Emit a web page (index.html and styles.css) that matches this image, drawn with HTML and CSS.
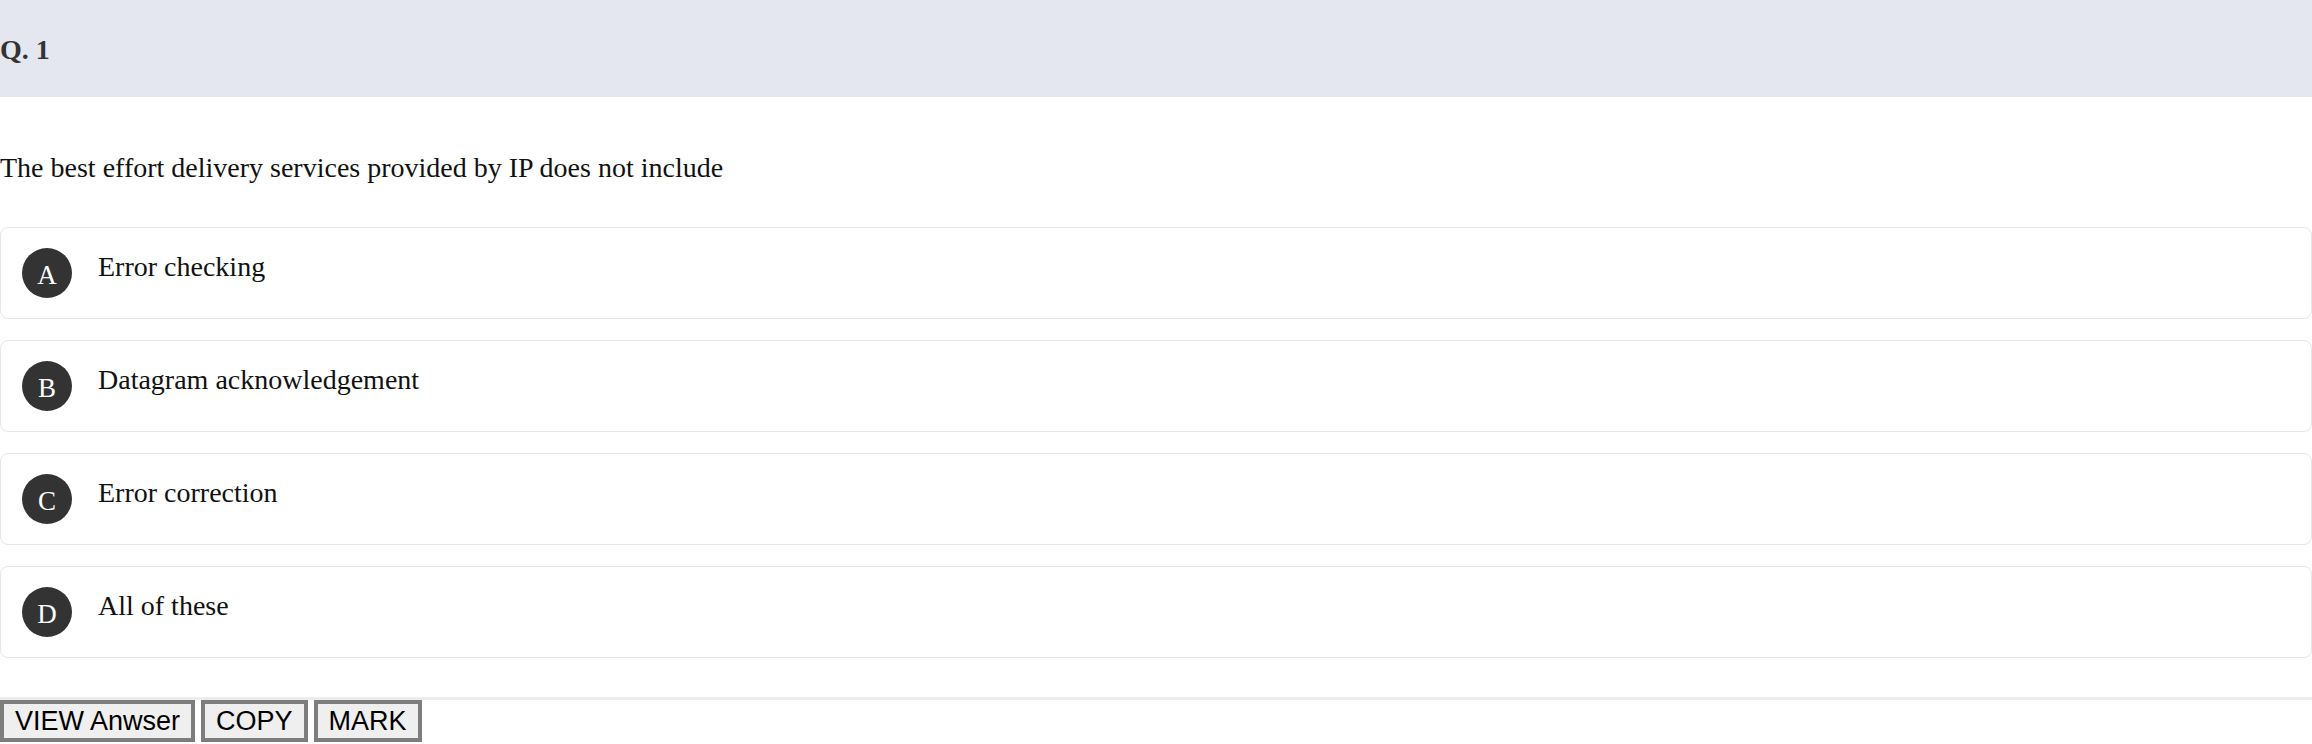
FILE: index.html
```html
<!DOCTYPE html>
<html>
<head>
<meta charset="utf-8">
<link rel="stylesheet" href="styles.css">
</head>
<body>
<div class="qhead"><h2 class="qnum">Q. 1</h2></div>
<p class="question">The best effort delivery services provided by IP does not include</p>
<div class="options">
  <div class="option"><span class="badge">A</span><span class="otext">Error checking</span></div>
  <div class="option"><span class="badge">B</span><span class="otext">Datagram acknowledgement</span></div>
  <div class="option"><span class="badge">C</span><span class="otext">Error correction</span></div>
  <div class="option"><span class="badge">D</span><span class="otext">All of these</span></div>
</div>
<div class="actions">
  <button class="btn">VIEW Anwser</button>
  <button class="btn">COPY</button>
  <button class="btn">MARK</button>
</div>
</body>
</html>
```
FILE: styles.css
```css
html, body {
  margin: 0;
  padding: 0;
  background: #ffffff;
  font-family: "Liberation Serif", "Times New Roman", serif;
  color: #111;
}
.qhead {
  background: #e4e7f0;
  height: 97px;
  display: flex;
  align-items: center;
  padding-top: 2px;
  box-sizing: border-box;
}
.qnum {
  margin: 0;
  font-size: 28px;
  font-weight: bold;
  color: #333;
}
.question {
  margin: 0;
  padding-top: 55px;
  font-size: 28px;
  line-height: 32px;
  height: 75px;
}
.options {
  display: flex;
  flex-direction: column;
  gap: 21px;
}
.option {
  display: flex;
  align-items: flex-start;
  gap: 26px;
  height: 92px;
  box-sizing: border-box;
  padding: 20px 21px;
  border: 1.5px solid #e6e6e6;
  border-radius: 8px;
}
.badge {
  flex: none;
  width: 50px;
  height: 50px;
  border-radius: 50%;
  background: #333;
  color: #fff;
  font-size: 27px;
  display: flex;
  align-items: center;
  justify-content: center;
  line-height: 1;
  padding-top: 4px;
  box-sizing: border-box;
}
.otext {
  font-size: 28px;
  line-height: 32px;
  padding-top: 3px;
}
.actions {
  margin-top: 39px;
  border-top: 3px solid #ececec;
  display: flex;
  gap: 6px;
}
.btn {
  font-family: "Liberation Sans", Arial, sans-serif;
  font-size: 27px;
  line-height: 30px;
  padding: 2px 11px;
  background: #efefef;
  color: #000;
  border: 4px solid #7d7d7d;
  margin: 0;
}
```
